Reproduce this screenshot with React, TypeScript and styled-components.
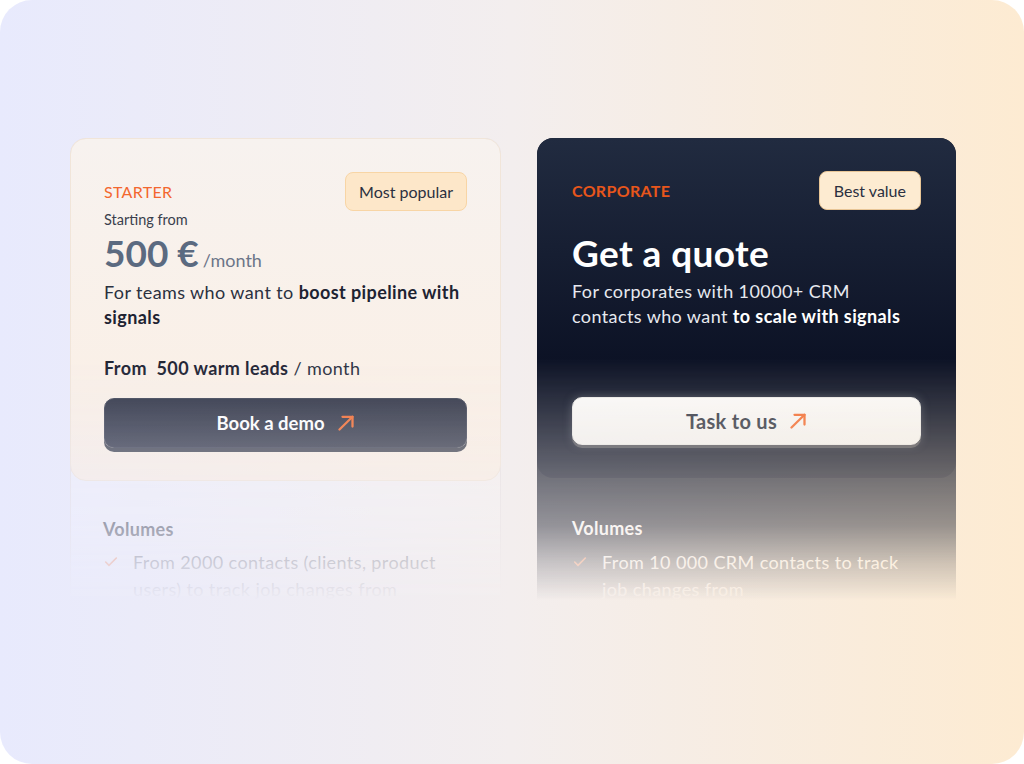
import React from "react";
import styled, { createGlobalStyle } from "styled-components";
import { Check } from "lucide-react";

const Global = createGlobalStyle`
  html, body { margin: 0; padding: 0; background: #ffffff; }
  body { font-family: Lato, "Open Sans", sans-serif; -webkit-font-smoothing: antialiased; }
  * { box-sizing: border-box; }
`;

const PAGE_BG = "linear-gradient(90deg, #e8eafd 0%, #f3eeee 50%, #fdebd2 100%)";

const Frame = styled.div`
  width: 1024px;
  height: 764px;
  border-radius: 32px;
  background: ${PAGE_BG};
  overflow: hidden;
  display: flex;
  align-items: flex-start;
  gap: 36px;
  padding: 138px 0 0 70px;
`;

const Card = styled.div<{ $dark?: boolean; $w: number }>`
  position: relative;
  width: ${(p) => p.$w}px;
  height: 467px;
  border-radius: 16px 16px 0 0;
  overflow: hidden;
  display: flex;
  flex-direction: column;
  background: ${(p) => (p.$dark ? "#1b2030" : "rgba(255,255,255,0.28)")};
  box-shadow: ${(p) => (p.$dark ? "none" : "inset 0 0 0 1px rgba(226,220,222,0.7)")};
  &::after {
    content: "";
    position: absolute;
    inset: 0;
    pointer-events: none;
    background: ${PAGE_BG};
    background-attachment: fixed;
    -webkit-mask-image: linear-gradient(to bottom, transparent 47%, rgba(0,0,0,0.4) 72.5%, rgba(0,0,0,0.56) 83%, rgba(0,0,0,0.8) 91%, #000 99%);
    mask-image: linear-gradient(to bottom, transparent 47%, rgba(0,0,0,0.4) 72.5%, rgba(0,0,0,0.56) 83%, rgba(0,0,0,0.8) 91%, #000 99%);
  }
`;

const Top = styled.div<{ $dark?: boolean }>`
  display: flex;
  flex-direction: column;
  height: ${(p) => (p.$dark ? 340 : 343)}px;
  padding: ${(p) => (p.$dark ? "33px 35px 0 35px" : "33px 33px 0 33px")};
  border-radius: 16px;
  background: ${(p) =>
    p.$dark
      ? "linear-gradient(180deg, #212b40 0%, #0c1225 66%, #0c1225 100%)"
      : "linear-gradient(180deg, #f7f2ef 0%, #fbefe4 100%)"};
  border: ${(p) => (p.$dark ? "none" : "1px solid #f1e5d9")};
`;

const Header = styled.div`
  display: flex;
  align-items: center;
  justify-content: space-between;
  height: 39px;
`;

const Tier = styled.span<{ $dark?: boolean }>`
  font-size: 16px;
  letter-spacing: 0.3px;
  font-weight: ${(p) => (p.$dark ? 700 : 400)};
  color: ${(p) => (p.$dark ? "#e8561b" : "#f3672f")};
`;

const Badge = styled.span<{ $dark?: boolean }>`
  height: 39px;
  display: inline-flex;
  align-items: center;
  padding: 0 ${(p) => (p.$dark ? 14 : 13)}px;
  border-radius: 8px;
  font-size: 16px;
  color: #2b3040;
  background: ${(p) => (p.$dark ? "#fdebd1" : "#fde7c9")};
  border: 1px solid ${(p) => (p.$dark ? "#e8c596" : "#f8d5a5")};
`;

const Small = styled.div`
  font-size: 14.5px;
  color: #3a3f4d;
  line-height: 17px;
`;

const PriceRow = styled.div`
  display: flex;
  align-items: baseline;
  gap: 4px;
  height: 52px;
  padding-top: 3px;
`;

const Price = styled.span`
  font-size: 37px;
  font-weight: 700;
  color: #5b6a80;
  line-height: 44px;
`;

const Per = styled.span`
  font-size: 18px;
  color: #6c7588;
`;

const Quote = styled.div`
  font-size: 37px;
  font-weight: 700;
  letter-spacing: 0.4px;
  color: #ffffff;
  line-height: 44px;
  margin-top: 21px;
  height: 48px;
`;

const Desc = styled.p<{ $dark?: boolean }>`
  margin: 0;
  font-size: 18px;
  letter-spacing: 0.4px;
  line-height: 25px;
  color: ${(p) => (p.$dark ? "#e7e9ef" : "#2b3040")};
  b { font-weight: 700; color: ${(p) => (p.$dark ? "#ffffff" : "#1e2332")}; }
`;

const Leads = styled.div`
  margin-top: 26px;
  font-size: 18px;
  letter-spacing: 0.4px;
  line-height: 25px;
  color: #2b3040;
  b { font-weight: 700; color: #1e2332; }
`;

const Spacer = styled.div`
  height: 51px;
`;

const Button = styled.button<{ $light?: boolean }>`
  margin-top: 17px;
  height: ${(p) => (p.$light ? 48 : 50)}px;
  width: 100%;
  border-radius: 10px;
  display: flex;
  align-items: center;
  justify-content: center;
  gap: 12px;
  font-family: Lato, "Open Sans", sans-serif;
  font-size: ${(p) => (p.$light ? 20 : 18.5)}px;
  letter-spacing: ${(p) => (p.$light ? 0.3 : 0)}px;
  font-weight: 700;
  cursor: pointer;
  color: ${(p) => (p.$light ? "#2f3442" : "#ffffff")};
  background: ${(p) =>
    p.$light
      ? "linear-gradient(180deg, #faf9f8 0%, #f3f2f0 100%)"
      : "linear-gradient(180deg, #2b3042 0%, #2f3446 100%)"};
  border: 1px solid ${(p) => (p.$light ? "#e9e8e6" : "#3b4052")};
  box-shadow: ${(p) =>
    p.$light
      ? "0 3px 0 #4a4c55, 0 0 8px rgba(120,125,140,0.5)"
      : "0 4px 0 #3a3e4c"};
`;

const ArrowIcon = styled.svg`
  width: 18px;
  height: 16px;
  flex: none;
  color: #f26a2e;
`;

const Arrow = () => (
  <ArrowIcon viewBox="0 0 18 16" fill="none" stroke="currentColor" strokeWidth={2.3} strokeLinecap="round" strokeLinejoin="round">
    <path d="M2.5 14.5 L15.5 1.8" />
    <path d="M5.5 1.8 H15.5 V11.5" />
  </ArrowIcon>
);

const Bottom = styled.div<{ $dark?: boolean }>`
  padding: ${(p) => (p.$dark ? "39px 35px 0 35px" : "37px 33px 0 33px")};
  display: flex;
  flex-direction: column;
`;

const FeatTitle = styled.div<{ $dark?: boolean }>`
  font-size: 18px;
  letter-spacing: 0.3px;
  font-weight: 700;
  line-height: 22px;
  color: ${(p) => (p.$dark ? "#ffffff" : "#3f4454")};
`;

const Item = styled.div<{ $dark?: boolean }>`
  margin-top: ${(p) => (p.$dark ? 10 : 9)}px;
  display: flex;
  gap: 14px;
  font-size: 18px;
  letter-spacing: 0.4px;
  line-height: 27px;
  color: ${(p) => (p.$dark ? "#ffffff" : "#4b5060")};
  svg { flex: none; margin-top: 5px; color: #f26a2e; }
`;

export default function App() {
  return (
    <>
      <Global />
      <Frame>
        <Card $w={431}>
          <Top>
            <Header>
              <Tier>STARTER</Tier>
              <Badge>Most popular</Badge>
            </Header>
            <Small>Starting from</Small>
            <PriceRow>
              <Price>500 €</Price>
              <Per>/month</Per>
            </PriceRow>
            <Desc>
              For teams who want to <b>boost pipeline with signals</b>
            </Desc>
            <Leads>
              <b>From&nbsp; 500 warm leads</b> / month
            </Leads>
            <Button>
              Book a demo <Arrow />
            </Button>
          </Top>
          <Bottom>
            <FeatTitle>Volumes</FeatTitle>
            <Item>
              <Check size={16} strokeWidth={2.4} />
              <span>From 2000 contacts (clients, product users) to track job changes from</span>
            </Item>
          </Bottom>
        </Card>
        <Card $w={419} $dark>
          <Top $dark>
            <Header>
              <Tier $dark>CORPORATE</Tier>
              <Badge $dark>Best value</Badge>
            </Header>
            <Quote>Get a quote</Quote>
            <Desc $dark>
              For corporates with 10000+ CRM contacts who want <b>to scale with signals</b>
            </Desc>
            <Spacer />
            <Button $light>
              Task to us <Arrow />
            </Button>
          </Top>
          <Bottom $dark>
            <FeatTitle $dark>Volumes</FeatTitle>
            <Item $dark>
              <Check size={16} strokeWidth={2.4} />
              <span>From 10 000 CRM contacts to track job changes from</span>
            </Item>
          </Bottom>
        </Card>
      </Frame>
    </>
  );
}
